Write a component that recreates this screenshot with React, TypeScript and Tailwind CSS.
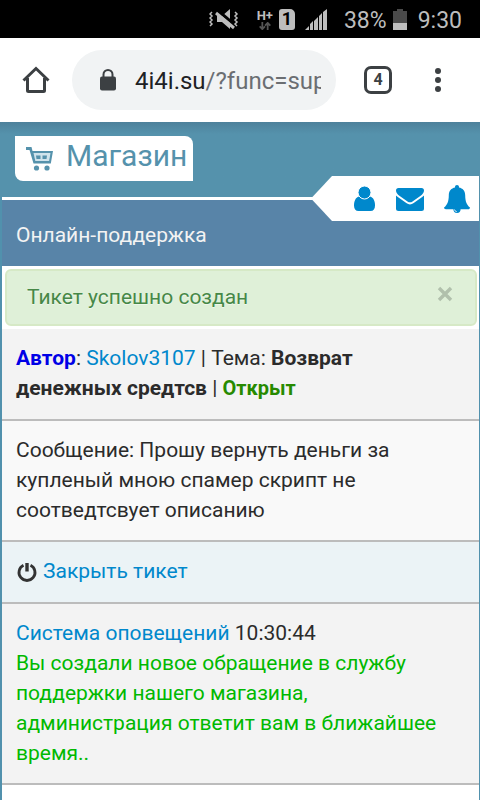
import type { ReactNode } from "react";

const NAV = [
  { label: "Профиль", icon: <UserIcon /> },
  { label: "Сообщения", icon: <MailIcon /> },
  { label: "Уведомления", icon: <BellIcon /> },
];

export default function App() {
  return (
    <div className="flex min-h-screen flex-col bg-[#5191ad] font-[Roboto,sans-serif] text-[#2b2b2b]">
      <StatusBar />
      <BrowserBar />
      <ShopHeader />
      <main className="mr-px ml-0.5 flex-1 bg-white text-[21px] leading-[30px]">
        <h1 className="border-y-[3px] border-white bg-[#5884a8] px-[14px] pt-5 pb-4 text-[#f3f3f3]">
          Онлайн-поддержка
        </h1>
        <div className="mr-0.5 mb-[3px] ml-[3px] flex h-[57px] items-start rounded-md border-2 border-[#d6e9c6] bg-[#dff0d8] px-5 pt-[11px] text-[#468847] [text-shadow:0_1px_0_rgba(255,255,255,0.5)]">
          <span className="flex-1">Тикет успешно создан</span>
          <button aria-label="Закрыть" className="mt-1 mr-0.5 text-[#b1c0ac]">
            <svg width="16" height="16" viewBox="0 0 16 16" stroke="currentColor" strokeWidth="3.400">
              <path d="M2 2l12 12M14 2L2 14" />
            </svg>
          </button>
        </div>
        <Row className="bg-[#f3f3f3] pb-4">
          <b className="text-[#0000e6]">Автор</b>: <Link>Skolov3107</Link> | Тема:{" "}
          <b>Возврат денежных средтсв</b> | <b className="text-xl leading-[30px] text-[#278a00]">Открыт</b>
        </Row>
        <Row className="bg-[#f9f9f9] pb-[15px]">
          Сообщение: Прошу вернуть деньги за купленый мною спамер скрипт не соотведтсвует описанию
        </Row>
        <Row className="bg-[#ebf3f6] pb-4">
          <Link>
            <span className="flex items-center gap-[5px]">
              <PowerIcon />
              Закрыть тикет
            </span>
          </Link>
        </Row>
        <Row className="bg-[#f3f3f3] pb-[15px]">
          <Link>Система оповещений</Link> 10:30:44
          <p className="text-[#00b900]">
            Вы создали новое обращение в службу поддержки нашего магазина, администрация ответит вам в
            ближайшее время..
          </p>
        </Row>
      </main>
    </div>
  );
}

function Row({ className, children }: { className: string; children: ReactNode }) {
  return <section className={`border-b-2 border-[#bcbcbc] pt-[14px] pr-5 pl-[14px] ${className}`}>{children}</section>;
}

function Link({ children }: { children: ReactNode }) {
  return (
    <a href="#" className="text-[#0088cc]">
      {children}
    </a>
  );
}

function StatusBar() {
  return (
    <div className="flex h-[38px] items-center justify-end bg-black pt-1 pr-[18px] text-[23px] leading-[30px] text-[#bdbdbd]">
      <svg width="30" height="24" viewBox="0 0 30 24" className="mr-[18px] mb-1" fill="none" stroke="currentColor">
        <path d="M8 9h5l8-7v20l-8-7H8z" fill="currentColor" stroke="none" />
        <path d="M7 2l20 17" stroke="#000" strokeWidth="3" />
        <path d="M7 6l18 15" strokeWidth="3" />
        <path
          d="M3 5l-2 2 2 2-2 2 2 2-2 2 2 2-2 2M26 5l2 2-2 2 2 2-2 2 2 2-2 2 2 2"
          strokeWidth="1.5"
        />
      </svg>
      <div className="mr-[6px] mb-1 flex flex-col items-center">
        <span className="text-[13px] leading-[13px] font-bold">H+</span>
        <svg width="12" height="8" viewBox="0 0 12 9" fill="none" stroke="#555" strokeWidth="2">
          <path d="M3 0v7M0 5l3 3 3-3M9 9V2M6 4l3-3 3 3" />
        </svg>
      </div>
      <span className="mr-[10px] mb-1 flex h-[21px] w-4 items-center justify-center rounded-[3px] rounded-tr-[5px] bg-[#bdbdbd] text-lg font-bold text-black">
        1
      </span>
      <svg width="22" height="21" viewBox="0 0 22 21" className="mr-[17px] mb-[3px]" fill="currentColor">
        <path d="M0 21h4v-4zM5 21h3v-9l-3 3zM9 21h4V8l-4 4zM14 21h3V4l-3 3zM18 21h4V0l-4 3z" />
      </svg>
      <span className="mr-[6px]">38%</span>
      <svg width="14" height="21" viewBox="0 0 14 21" className="mr-[11px] mb-[3px]">
        <path d="M0 2h4V0h6v2h4v19H0z" fill="#4a4a4a" />
        <path d="M0 14h14v7H0z" fill="#bdbdbd" />
      </svg>
      <span>9:30</span>
    </div>
  );
}

function BrowserBar() {
  return (
    <div className="flex h-[84px] items-center bg-white pl-[22px] text-[#3c4043]">
      <button aria-label="Домой">
        <svg width="28" height="28" viewBox="0 0 28 28" fill="none" stroke="currentColor" strokeWidth="3">
          <path d="M1.500 14.500L14 2.500l12.500 12" />
          <path d="M5.500 12v12.500a1 1 0 0 0 1 1h15a1 1 0 0 0 1-1V12" />
        </svg>
      </button>
      <div className="ml-[22px] flex h-[60px] min-w-0 flex-1 items-center rounded-full bg-[#f1f3f4] pr-[15px] pl-7">
        <svg width="16" height="22" viewBox="0 0 16 22" className="mr-[19px] shrink-0">
          <path d="M3.500 9V5.500a4.500 4.500 0 0 1 9 0V9" fill="none" stroke="currentColor" strokeWidth="2" />
          <rect y="7.500" width="16" height="14" rx="2" fill="currentColor" />
        </svg>
        <span className="flex-1 overflow-hidden pt-0.5 text-2xl whitespace-nowrap text-[#6b6e72]">
          <span className="text-[#202124]">4i4i.su</span>/?func=sup
        </span>
      </div>
      <button
        aria-label="Вкладки"
        className="ml-7 flex size-7 items-center justify-center rounded-[7px] border-[3px] border-[#3c4043] text-base font-bold"
      >
        4
      </button>
      <button aria-label="Меню" className="mr-[39px] ml-[43px]">
        <svg width="6" height="24" viewBox="0 0 6 24" fill="currentColor">
          <circle cx="3" cy="3" r="3" />
          <circle cx="3" cy="12" r="3" />
          <circle cx="3" cy="21" r="3" />
        </svg>
      </button>
    </div>
  );
}

function ShopHeader() {
  return (
    <header className="relative flex h-[75px] items-start bg-[#5592ac] bg-linear-to-b from-[#4d819b] to-[#5592ac] to-[12px] px-[15px] pt-[14px]">
      <a
        href="#"
        className="flex h-[45px] items-center rounded-tr-lg rounded-bl-lg bg-white pr-[6px] pl-[11px] text-[30px] leading-[40px] text-[#5592ac]"
      >
        <CartIcon />
        <span className="mb-[5px] ml-[13px]">Магазин</span>
      </a>
      {/* ribbon hangs over the title bar below */}
      <nav className="absolute top-[54px] right-px flex">
        <svg width="21" height="45" viewBox="0 0 21 45" fill="#fff">
          <path d="M21 0v45L0 22.500z" />
        </svg>
        <div className="flex h-[45px] w-[147px] items-center justify-between bg-white pr-[9px] pl-[22px]">
          {NAV.map((item) => (
            <a key={item.label} href="#" aria-label={item.label} className="text-[#0088cc]">
              {item.icon}
            </a>
          ))}
        </div>
      </nav>
    </header>
  );
}

function UserIcon() {
  return (
    <svg width="21" height="25" viewBox="0 0 21 25" fill="currentColor">
      <path d="M5 10.500C1.500 11.500 0 15 0 19.500 0 23 1.500 25 4.500 25h12c3 0 4.500-2 4.500-5.500 0-4.500-1.500-8-5-9z" />
      <circle cx="10.500" cy="6.500" r="6.500" stroke="#fff" strokeWidth="1" />
    </svg>
  );
}

function MailIcon() {
  return (
    <svg width="28" height="23" viewBox="0 0 28 23" fill="currentColor" className="mt-0.5">
      <path d="M2.500 0h23A2.500 2.500 0 0 1 28 2.500c0 2-1.500 3.800-3 4.900l-8.500 6q-2.500 1.700-5 0L3 7.400C1.500 6.300 0 4.500 0 2.500A2.500 2.500 0 0 1 2.500 0z" />
      <path d="M0 7.500q.8.900 1.800 1.600l8.500 6q3.700 2.600 7.400 0l8.500-6Q27.200 8.400 28 7.500v13a2.500 2.500 0 0 1-2.500 2.500h-23A2.500 2.500 0 0 1 0 20.500z" />
    </svg>
  );
}

function BellIcon() {
  return (
    <svg width="26" height="28" viewBox="0 0 26 28" fill="currentColor">
      <path d="M13 0c1.200 0 2 .8 2 2l-.1.600c3.800.6 6.300 3.600 6.300 7.600 0 6.500 1.800 10 4.800 12.300 0 1-.8 1.800-1.800 1.800H16.600a3.600 3.600 0 0 1-7.200 0H1.800A1.800 1.800 0 0 1 0 22.500c3-2.300 4.800-5.800 4.800-12.300 0-4 2.500-7 6.300-7.600L11 2c0-1.200.8-2 2-2z" />
      <path d="M10.500 24.500q.3 2 2.300 2.200" fill="none" stroke="#fff" strokeWidth=".8" />
    </svg>
  );
}

function CartIcon() {
  return (
    <svg width="27" height="24" viewBox="0 0 27 24">
      <path d="M0 0h5.500l1 4H27l-2.200 12.500H7.500L3.500 3H0z" fill="#5592ac" />
      <path d="M7.500 6h17l-1.400 8H9.300z" fill="#cfe3ec" />
      <path d="M10 8.500h4.500v3.500H10.500zM16.500 8.500H21l-.5 3.500h-4z" fill="#5592ac" />
      <circle cx="10.500" cy="21" r="2.600" fill="#5592ac" />
      <circle cx="21" cy="21" r="2.600" fill="#5592ac" />
    </svg>
  );
}

function PowerIcon() {
  return (
    <svg width="22" height="22" viewBox="0 0 22 22" fill="none" stroke="#333" className="mt-0.5">
      <path d="M7.500 4.300a8 8 0 1 0 7 0" strokeWidth="2.800" />
      <path d="M11 2v8.500" strokeWidth="3.400" />
    </svg>
  );
}
